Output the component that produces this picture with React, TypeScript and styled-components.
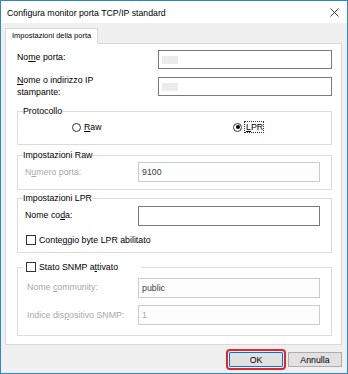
import React from 'react';
import styled, { createGlobalStyle, css } from 'styled-components';

const GlobalStyle = createGlobalStyle`
  html, body {
    margin: 0;
    padding: 0;
    background: #ffffff;
    overflow: hidden;
  }
  * {
    box-sizing: border-box;
  }
`;

const font = css`
  font-family: 'Liberation Sans', Arial, sans-serif;
  font-size: 8.8px;
  line-height: 12px;
`;

const Window = styled.div`
  ${font};
  width: 348px;
  height: 374px;
  border: 1px solid #2b86d6;
  display: flex;
  flex-direction: column;
  color: #000;
`;

const TitleBar = styled.div`
  height: 22px;
  flex: none;
  display: flex;
  align-items: center;
  justify-content: space-between;
  padding: 1px 8px 0 6px;
  background: #ffffff;
  font-size: 8.75px;
`;

const Body = styled.div`
  flex: 1;
  display: flex;
  flex-direction: column;
  background: #f0f0f0;
  padding: 5px 5px 0 4px;
`;

const Tab = styled.div`
  align-self: flex-start;
  position: relative;
  z-index: 1;
  width: 93px;
  height: 16px;
  margin-bottom: -1px;
  padding: 1px 0 0 6px;
  background: #ffffff;
  border: 1px solid #d9d9d9;
  border-bottom: none;
  font-size: 7.5px;
  line-height: 12px;
`;

const Panel = styled.div`
  height: 302px;
  flex: none;
  display: flex;
  flex-direction: column;
  background: #ffffff;
  border: 1px solid #d9d9d9;
  padding: 6px 9px 0 11px;
`;

const FieldRow = styled.div<{ $top?: number; $indent?: number; $label?: number }>`
  display: grid;
  grid-template-columns: ${(p) => p.$label ?? 113}px 1fr;
  align-items: start;
  margin-top: ${(p) => p.$top ?? 0}px;
  padding-left: ${(p) => p.$indent ?? 0}px;
`;

const Label = styled.div<{ $disabled?: boolean; $offset?: number }>`
  margin-top: ${(p) => p.$offset ?? 0}px;
  color: ${(p) => (p.$disabled ? '#a8a8a8' : '#000000')};
  white-space: nowrap;
`;

const TextBox = styled.div<{ $disabled?: boolean; $height?: number; $width?: number; $offset?: number }>`
  height: ${(p) => p.$height ?? 20}px;
  width: ${(p) => (p.$width ? `${p.$width}px` : 'auto')};
  margin-top: ${(p) => p.$offset ?? 0}px;
  border: 1px solid ${(p) => (p.$disabled ? '#cccccc' : '#7a7a7a')};
  background: ${(p) => (p.$disabled ? '#fdfdfd' : '#ffffff')};
  display: flex;
  align-items: center;
  padding: 0 0 0 3px;
`;

const BoxValue = styled.span<{ $muted?: boolean }>`
  color: ${(p) => (p.$muted ? '#a8a8a8' : '#3c3c3c')};
`;

const Redacted = styled.span`
  display: block;
  width: 16px;
  height: 8px;
  margin-left: 0px;
  background: #ececec;
  filter: blur(0.6px);
`;

const Group = styled.fieldset<{ $top: number; $bottom: number }>`
  margin: ${(p) => p.$top}px 0 0 0;
  padding: 0 0 ${(p) => p.$bottom}px 0;
  border: 1px solid #dcdcdc;
  min-inline-size: 0;
`;

const Legend = styled.legend<{ $wide?: boolean }>`
  margin-left: 5px;
  padding: ${(p) => (p.$wide ? '0 23px 0 3px' : '0')};
  line-height: 12px;
  color: #000;
`;

const RadioRow = styled.div`
  display: grid;
  grid-template-columns: 161px 1fr;
  padding-left: 54px;
  margin-top: 4px;
`;

const Choice = styled.label`
  display: flex;
  align-items: center;
  gap: 3px;
  height: 12px;
`;

const Radio = styled.span<{ $checked?: boolean }>`
  width: 9px;
  height: 9px;
  border-radius: 50%;
  border: 1px solid #333333;
  background: #ffffff;
  display: inline-flex;
  align-items: center;
  justify-content: center;
  &::after {
    content: '';
    width: 4px;
    height: 4px;
    border-radius: 50%;
    background: ${(p) => (p.$checked ? '#000000' : 'transparent')};
  }
`;

const Focus = styled.span`
  border: 1px dotted #333333;
  padding: 0 0 0 1px;
  margin-left: -1px;
  line-height: 10px;
`;

const CheckRow = styled.label<{ $top?: number; $indent?: number }>`
  display: flex;
  align-items: center;
  gap: 3px;
  height: 12px;
  margin-top: ${(p) => p.$top ?? 0}px;
  padding-left: ${(p) => p.$indent ?? 0}px;
`;

const CheckBox = styled.span`
  width: 10px;
  height: 10px;
  border: 1px solid #333333;
  background: #ffffff;
  flex: none;
`;

const Footer = styled.div`
  flex: 1;
  display: flex;
  justify-content: flex-end;
  align-items: flex-start;
  gap: 5px;
  padding-top: 7px;
`;

const Button = styled.button<{ $primary?: boolean }>`
  ${font};
  width: 54px;
  height: 15px;
  padding: 0;
  color: #000;
  background: #e1e1e1;
  border: 1px solid ${(p) => (p.$primary ? '#0078d7' : '#adadad')};
  border-radius: 0;
  ${(p) =>
    p.$primary &&
    css`
      outline: 2px solid #e3262c;
      outline-offset: 1px;
      border-radius: 1px;
    `}
`;

const U = styled.span`
  text-decoration: underline;
  text-underline-offset: 1px;
`;

const CloseIcon = () => (
  <svg width="9" height="9" viewBox="0 0 9 9">
    <path d="M0.5 0.5 L8.5 8.5 M8.5 0.5 L0.5 8.5" stroke="#2b2b2b" strokeWidth="0.9" fill="none" />
  </svg>
);

export default function App() {
  return (
    <>
      <GlobalStyle />
      <Window>
        <TitleBar>
          <span>Configura monitor porta TCP/IP standard</span>
          <CloseIcon />
        </TitleBar>
        <Body>
          <Tab>Impostazioni della porta</Tab>
          <Panel>
            <FieldRow $label={141}>
              <Label $offset={1}>
                No<U>m</U>e porta:
              </Label>
              <TextBox $height={19}>
                <Redacted />
              </TextBox>
            </FieldRow>
            <FieldRow $label={141} $top={5}>
              <Label>
                <U>N</U>ome o indirizzo IP
                <br />
                stampante:
              </Label>
              <TextBox $height={19} $offset={3}>
                <Redacted />
              </TextBox>
            </FieldRow>

            <Group $top={7} $bottom={11}>
              <Legend>Protocollo</Legend>
              <RadioRow>
                <Choice>
                  <Radio />
                  <span>
                    <U>R</U>aw
                  </span>
                </Choice>
                <Choice>
                  <Radio $checked />
                  <Focus>
                    <U>L</U>PR
                  </Focus>
                </Choice>
              </RadioRow>
            </Group>

            <Group $top={4} $bottom={7}>
              <Legend>Impostazioni Raw</Legend>
              <FieldRow $top={1} $indent={7}>
                <Label $disabled $offset={4}>
                  N<U>u</U>mero porta:
                </Label>
                <TextBox $disabled $width={182}>
                  <BoxValue>9100</BoxValue>
                </TextBox>
              </FieldRow>
            </Group>

            <Group $top={2} $bottom={6}>
              <Legend>Impostazioni LPR</Legend>
              <FieldRow $top={2} $indent={7}>
                <Label $offset={3}>
                  Nome co<U>d</U>a:
                </Label>
                <TextBox $width={182} />
              </FieldRow>
              <CheckRow $top={8} $indent={8}>
                <CheckBox />
                <span>
                  Conte<U>g</U>gio byte LPR abilitato
                </span>
              </CheckRow>
            </Group>

            <Group $top={8} $bottom={10}>
              <Legend $wide>
                <CheckRow>
                  <CheckBox />
                  <span>
                    Stato SNMP a<U>t</U>tivato
                  </span>
                </CheckRow>
              </Legend>
              <FieldRow $top={5} $indent={9} $label={111}>
                <Label $disabled $offset={3}>
                  Nome <U>c</U>ommunity:
                </Label>
                <TextBox $disabled $width={182}>
                  <BoxValue>public</BoxValue>
                </TextBox>
              </FieldRow>
              <FieldRow $top={7} $indent={9} $label={111}>
                <Label $disabled $offset={4}>
                  Indice dis<U>p</U>ositivo SNMP:
                </Label>
                <TextBox $disabled $width={182}>
                  <BoxValue $muted>1</BoxValue>
                </TextBox>
              </FieldRow>
            </Group>
          </Panel>
          <Footer>
            <Button $primary>OK</Button>
            <Button>Annulla</Button>
          </Footer>
        </Body>
      </Window>
    </>
  );
}
